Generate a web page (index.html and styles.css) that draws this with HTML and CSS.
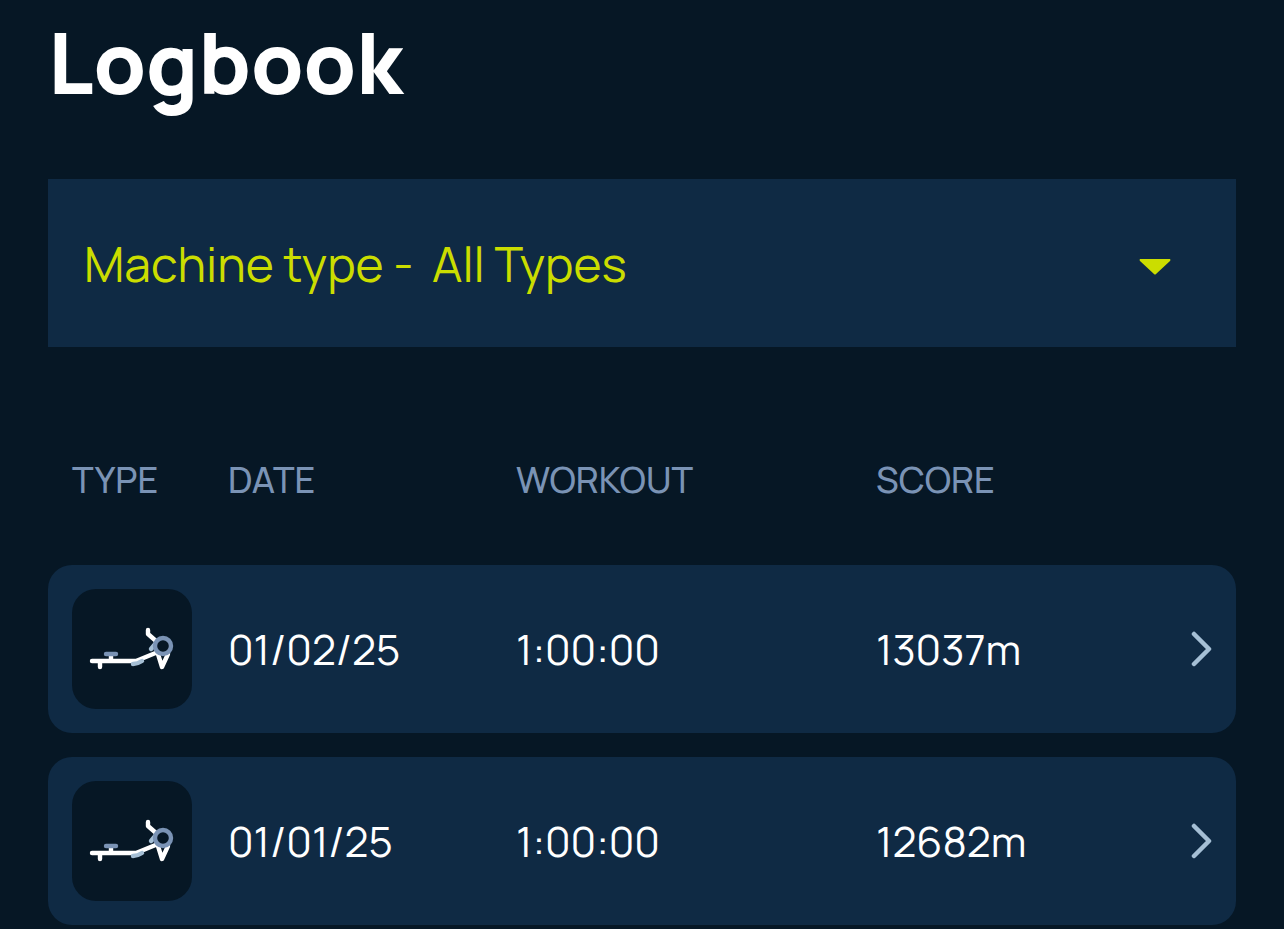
FILE: index.html
```html
<!DOCTYPE html>
<html lang="en">
<head>
<meta charset="UTF-8" />
<meta name="viewport" content="width=device-width, initial-scale=1" />
<title>Logbook</title>
<link rel="stylesheet" href="styles.css">
</head>
<body>

<svg class="sprite" aria-hidden="true">
  <symbol id="rower" viewBox="0 0 120 120">
    <g fill="none" stroke-linecap="round" stroke-linejoin="round" stroke-width="4.4">
      <path d="M79 60L84 54" stroke="#a5bfd5" />
      <path d="M20 72H64L86 63M28 72V78M39 66V71" stroke="#fff" />
      <path d="M61 75C65 75 67 74 70 72" stroke="#a5bfd5" />
      <path d="M76 41V45L84 52M86 65L90 78L96 65" stroke="#fff" />
      <path d="M34 65H44" stroke="#7a93b5" />
      <circle cx="91" cy="57" r="8" fill="#061725" stroke="#7a93b5" />
    </g>
  </symbol>
  <symbol id="chevron" viewBox="0 0 24 40">
    <path d="M6 5L21 20L6 35" fill="none" stroke="#a5bfd5" stroke-width="4.5" stroke-linecap="round" stroke-linejoin="round" />
  </symbol>
</svg>

<main class="logbook">
  <h1 class="title">Logbook</h1>

  <div class="filter">
    <label for="machineType">Machine type -&nbsp;</label>
    <select id="machineType" class="filterSelect">
      <option>All Types</option>
      <option>RowErg</option>
      <option>SkiErg</option>
      <option>BikeErg</option>
    </select>
    <svg class="caret" viewBox="0 0 32 16" aria-hidden="true"><path d="M1 0H31Q32 1 31 2L17 15Q16 16 15 15L1 2Q0 1 1 0Z" fill="#cbdd00" /></svg>
  </div>

  <table class="workouts">
    <thead>
      <tr>
        <th class="colType">TYPE</th>
        <th class="colDate">DATE</th>
        <th class="colWorkout">WORKOUT</th>
        <th>SCORE</th>
        <td class="colOpen"></td>
      </tr>
    </thead>
    <tbody>
      <tr>
        <td><div class="machine"><svg role="img" aria-label="RowErg"><use href="#rower" /></svg></div></td>
        <td>01/02/25</td>
        <td>1:00:00</td>
        <td>13037m</td>
        <td class="open"><a href="#" aria-label="Open workout 01/02/25"><svg><use href="#chevron" /></svg></a></td>
      </tr>
      <tr>
        <td><div class="machine"><svg role="img" aria-label="RowErg"><use href="#rower" /></svg></div></td>
        <td>01/01/25</td>
        <td>1:00:00</td>
        <td>12682m</td>
        <td class="open"><a href="#" aria-label="Open workout 01/01/25"><svg><use href="#chevron" /></svg></a></td>
      </tr>
    </tbody>
  </table>
</main>

</body>
</html>
```
FILE: styles.css
```css
* {
  box-sizing: border-box;
}

body {
  margin: 0;
  background-color: #061725;
  color: #fff;
  font-family: Manrope, Inter, "Liberation Sans", sans-serif;
}

.sprite {
  display: none;
}

.logbook {
  padding: 2px 48px 0;
}

.title {
  margin: 0 0 57px;
  font-size: 84px;
  line-height: 120px;
  font-weight: 800;
}

.filter {
  display: flex;
  align-items: center;
  height: 168px;
  padding: 0 65px 0 36px;
  background-color: #0f2a44;
  color: #cbdd00;
  font-size: 48px;
  font-weight: 400;
}

.filterSelect {
  flex: 1;
  height: 100%;
  margin: 0;
  padding: 0 0 0 9px;
  border: 0;
  background: none;
  color: inherit;
  font: inherit;
  appearance: none;
}

.caret {
  width: 32px;
  height: 16px;
  margin-top: 8px;
}

.workouts {
  width: 100%;
  margin: 48px 0 -24px;
  border-collapse: separate;
  border-spacing: 0 24px;
  table-layout: fixed;
  font-size: 42px;
  font-weight: 400;
}

.workouts th {
  height: 122px;
  padding: 0 0 2px;
  color: #7a93b5;
  font-size: 36px;
  font-weight: 500;
  text-align: left;
}

.workouts .colType {
  width: 180px;
  padding-left: 24px;
}

.colDate {
  width: 288px;
}

.colWorkout {
  width: 360px;
}

.colOpen {
  width: 72px;
}

.workouts tbody td {
  height: 168px;
  padding: 0;
  background-color: #0f2a44;
}

.workouts tbody td:first-child {
  padding-left: 24px;
  border-radius: 24px 0 0 24px;
}

.workouts tbody td:last-child {
  padding-right: 24px;
  border-radius: 0 24px 24px 0;
}

.machine {
  width: 120px;
  height: 120px;
  border-radius: 24px;
  background-color: #061725;
}

.machine svg {
  display: block;
  width: 120px;
  height: 120px;
}

.open a {
  display: flex;
  justify-content: flex-end;
}

.open svg {
  width: 24px;
  height: 40px;
}
```
